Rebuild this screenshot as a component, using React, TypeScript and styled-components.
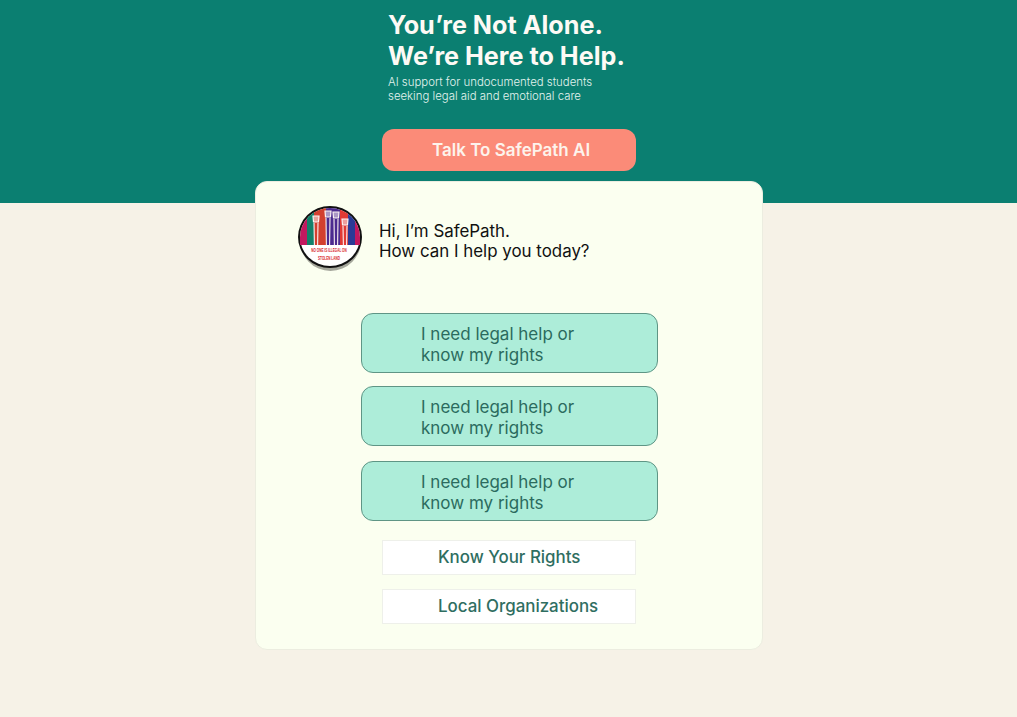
import React from 'react';
import styled, { createGlobalStyle } from 'styled-components';

const GlobalStyle = createGlobalStyle`
  html, body {
    margin: 0;
    padding: 0;
    background: #f6f2e7;
    font-family: Inter, "Liberation Sans", sans-serif;
  }
`;

const Page = styled.div`
  width: 1017px;
  height: 717px;
  overflow: hidden;
  background: #f6f2e7;
`;

const Hero = styled.header`
  height: 203px;
  box-sizing: border-box;
  padding: 10px 0 0 382px;
  background: #0b7f71;
`;

const HeroText = styled.div`
  padding-left: 6px;
`;

const Title = styled.h1`
  margin: 0;
  font-size: 25.2px;
  line-height: 31px;
  font-weight: 700;
  color: #fdfaf5;
`;

const Subtitle = styled.p`
  margin: 3px 0 0;
  font-size: 11.4px;
  line-height: 14px;
  font-weight: 300;
  color: #e2f3ee;
`;

const TalkButton = styled.button`
  display: block;
  width: 254px;
  height: 42px;
  margin-top: 26px;
  padding: 0 0 0 50px;
  border: 0;
  border-radius: 12px;
  background: #fb8b78;
  color: #fdf3ec;
  font-family: inherit;
  font-size: 17px;
  font-weight: 600;
  text-align: left;
`;

const Card = styled.main`
  width: 508px;
  height: 469px;
  box-sizing: border-box;
  margin: -22px 0 0 255px;
  padding: 24px 0 0 42px;
  position: relative;
  background: #fbfff0;
  border: 1px solid #ecede0;
  border-radius: 12px;
`;

const Greeting = styled.div`
  display: flex;
  align-items: flex-start;
  gap: 17px;
  height: 107px;
`;

const Avatar = styled.svg`
  width: 64px;
  height: 66px;
  flex: none;
`;

const GreetingText = styled.p`
  margin: 15px 0 0;
  font-size: 16.9px;
  line-height: 20px;
  color: #111111;
`;

const Choices = styled.div`
  display: flex;
  flex-direction: column;
  margin-left: 63px;
`;

const Choice = styled.button<{ $gap: number }>`
  width: 297px;
  height: 60px;
  box-sizing: border-box;
  margin-bottom: ${props => props.$gap}px;
  padding: 4px 0 0 59px;
  border: 1px solid #5f9585;
  border-radius: 12px;
  background: #adedd9;
  color: #2b6b5e;
  font-family: inherit;
  font-size: 17px;
  line-height: 21px;
  text-align: left;
`;

const LinkRow = styled.a<{ $gap: number }>`
  display: block;
  width: 254px;
  height: 35px;
  box-sizing: border-box;
  margin: 0 0 ${props => props.$gap}px 21px;
  padding-left: 55px;
  background: #ffffff;
  border: 1px solid #eef0ea;
  color: #2f6e61;
  font-size: 16.9px;
  font-weight: 500;
  line-height: 33px;
`;

const stripes = [
  { x: 0, w: 9, fill: '#c2185f' },
  { x: 9, w: 7, fill: '#12806a' },
  { x: 16, w: 12, fill: '#d2402f' },
  { x: 28, w: 14, fill: '#4b2a8f' },
  { x: 42, w: 8, fill: '#e03a34' },
  { x: 50, w: 7, fill: '#2b3a96' },
  { x: 57, w: 7, fill: '#c2185f' },
];

const fists = [
  { x: 18, top: 9 },
  { x: 30, top: 4 },
  { x: 38, top: 5 },
  { x: 47, top: 12 },
];

function Badge() {
  return (
    <Avatar viewBox="0 0 64 66">
      <ellipse cx="32.5" cy="33" rx="31" ry="32" fill="#a6a89c" />
      <ellipse cx="32" cy="31" rx="32" ry="31" fill="#111111" />
      <ellipse cx="32" cy="31" rx="30" ry="29" fill="#ffffff" />
      <clipPath id="badge-top">
        <path d="M2 39V31a30 29 0 0 1 60 0V39Z" />
      </clipPath>
      <g clipPath="url(#badge-top)">
        {stripes.map(s => (
          <rect key={s.x} x={s.x} y="0" width={s.w} height="39" fill={s.fill} />
        ))}
        {fists.map(f => (
          <g key={f.x} fill="none" stroke="#fbf3f4">
            <path
              d={`M${f.x - 1.6} 39L${f.x - 2} ${f.top + 8}M${f.x + 1.6} 39L${f.x + 2} ${f.top + 8}`}
              strokeWidth="1.1"
            />
            <path
              d={`M${f.x - 3} ${f.top + 1}L${f.x + 3} ${f.top + 1}L${f.x + 2.5} ${f.top + 7}L${f.x - 2.5} ${f.top + 7}Z`}
              fill="#fbf3f4"
              fillOpacity="0.55"
              strokeWidth="1.2"
            />
          </g>
        ))}
      </g>
      <text transform="translate(31 46) scale(0.62 1)" textAnchor="middle" fontFamily="Liberation Sans" fontSize="5" fontWeight="700" fill="#d8232a">NO ONE IS ILLEGAL ON</text>
      <text transform="translate(31 54) scale(0.62 1)" textAnchor="middle" fontFamily="Liberation Sans" fontSize="5" fontWeight="700" fill="#d8232a">STOLEN LAND</text>
    </Avatar>
  );
}

function App() {
  return (
    <Page>
      <GlobalStyle />
      <Hero>
        <HeroText>
          <Title>You’re Not Alone.<br />We’re Here to Help.</Title>
          <Subtitle>AI support for undocumented students<br />seeking legal aid and emotional care</Subtitle>
        </HeroText>
        <TalkButton>Talk To SafePath AI</TalkButton>
      </Hero>
      <Card>
        <Greeting>
          <Badge />
          <GreetingText>Hi, I’m SafePath.<br />How can I help you today?</GreetingText>
        </Greeting>
        <Choices>
          <Choice $gap={13}>I need legal help or<br />know my rights</Choice>
          <Choice $gap={15}>I need legal help or<br />know my rights</Choice>
          <Choice $gap={19}>I need legal help or<br />know my rights</Choice>
          <LinkRow $gap={14}>Know Your Rights</LinkRow>
          <LinkRow $gap={0}>Local Organizations</LinkRow>
        </Choices>
      </Card>
    </Page>
  );
}

export default App;
